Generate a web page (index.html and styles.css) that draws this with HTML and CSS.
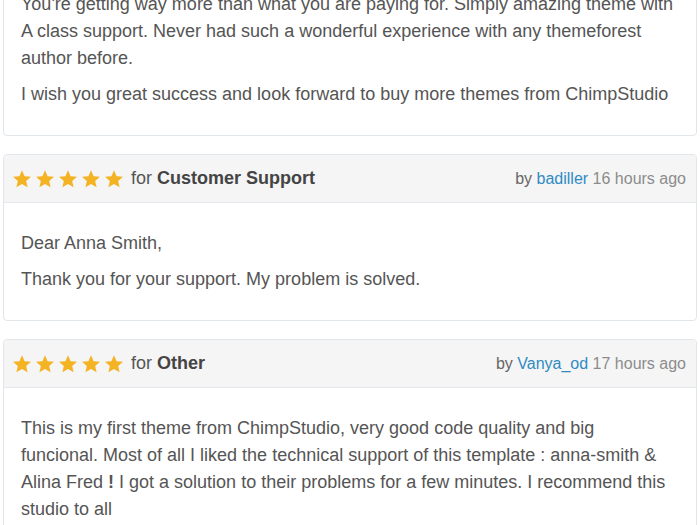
FILE: index.html
```html
<!DOCTYPE html>
<html>
<head>
<meta charset="utf-8">
<link rel="stylesheet" href="styles.css">
</head>
<body>
<svg width="0" height="0" class="defs">
  <defs>
    <symbol id="star" viewBox="0 0 24 24">
      <polygon points="12,1.5 15.1,8.6 22.8,9.3 17,14.4 18.7,22 12,18 5.3,22 7,14.4 1.2,9.3 8.9,8.6"/>
    </symbol>
  </defs>
</svg>
<div class="list">
  <div class="review first">
    <div class="body">
      <p>You're getting way more than what you are paying for. Simply amazing theme with A class support. Never had such a wonderful experience with any themeforest author before.</p>
      <p>I wish you great success and look forward to buy more themes from ChimpStudio</p>
    </div>
  </div>

  <div class="review">
    <div class="head">
      <div class="title">
        <span class="stars">
          <svg class="star"><use href="#star"/></svg><svg class="star"><use href="#star"/></svg><svg class="star"><use href="#star"/></svg><svg class="star"><use href="#star"/></svg><svg class="star"><use href="#star"/></svg>
        </span>
        <span class="for">for <b>Customer Support</b></span>
      </div>
      <div class="meta">by <a href="#">badiller</a> <span class="time">16 hours ago</span></div>
    </div>
    <div class="body">
      <p>Dear Anna Smith,</p>
      <p>Thank you for your support. My problem is solved.</p>
    </div>
  </div>

  <div class="review">
    <div class="head">
      <div class="title">
        <span class="stars">
          <svg class="star"><use href="#star"/></svg><svg class="star"><use href="#star"/></svg><svg class="star"><use href="#star"/></svg><svg class="star"><use href="#star"/></svg><svg class="star"><use href="#star"/></svg>
        </span>
        <span class="for">for <b>Other</b></span>
      </div>
      <div class="meta">by <a href="#">Vanya_od</a> <span class="time">17 hours ago</span></div>
    </div>
    <div class="body">
      <p>This is my first theme from ChimpStudio, very good code quality and big funcional. Most of all I liked the technical support of this template : anna-smith &amp; Alina Fred <b>!</b> I got a solution to their problems for a few minutes. I recommend this studio to all</p>
    </div>
  </div>
</div>
</body>
</html>
```
FILE: styles.css
```css
html, body {
  margin: 0;
  padding: 0;
  background: #ffffff;
}
body {
  font-family: "Liberation Sans", Arial, sans-serif;
  color: #555555;
  overflow: hidden;
}
.defs {
  position: absolute;
  width: 0;
  height: 0;
}
.list {
  display: flex;
  flex-direction: column;
  gap: 18px;
  padding: 0 3px;
  margin-top: -37px;
}
.review {
  border: 1px solid #e1e6eb;
  border-radius: 4px;
  background: #fff;
}
.first {
  border-top-left-radius: 0;
  border-top-right-radius: 0;
}
.head {
  display: flex;
  justify-content: space-between;
  align-items: center;
  height: 47px;
  padding: 0 10px 0 8px;
  background: #f5f5f5;
  border-bottom: 1px solid #e4e8ec;
  border-radius: 4px 4px 0 0;
}
.title {
  display: flex;
  align-items: center;
  gap: 7px;
  font-size: 18px;
  color: #555;
}
.title b {
  color: #444;
}
.stars {
  display: flex;
  gap: 3px;
  margin-top: 1px;
}
.star {
  width: 20px;
  height: 20px;
  fill: #f4b322;
}
.meta {
  font-size: 16px;
  color: #666;
}
.meta a {
  color: #2f8bc4;
  text-decoration: none;
}
.meta .time {
  color: #8c8c8c;
}
.body {
  padding: 27px 22px 27px 17px;
  font-size: 18px;
  line-height: 27px;
}
.body p {
  margin: 0 0 9px;
}
.body p:last-child {
  margin-bottom: 0;
}
.body b {
  font-weight: bold;
}
```
